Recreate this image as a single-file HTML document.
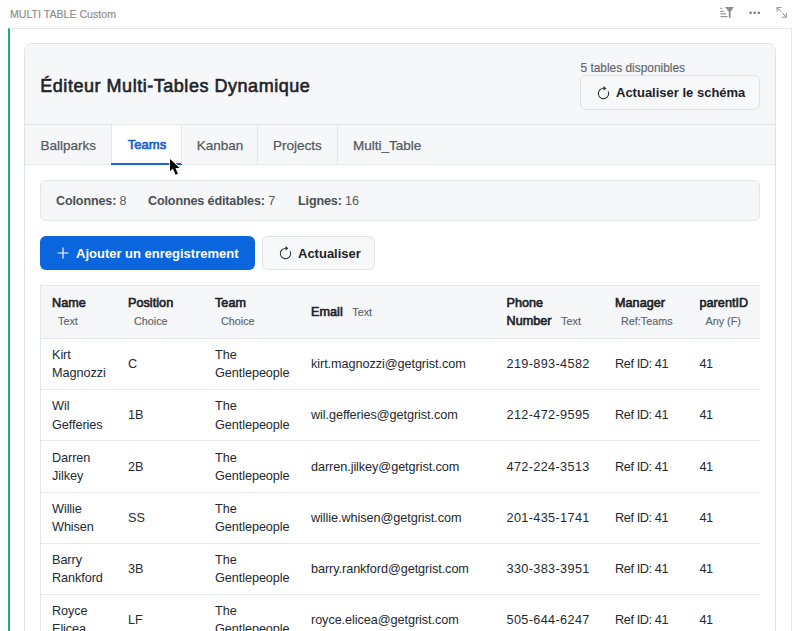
<!DOCTYPE html>
<html><head><meta charset="utf-8">
<style>
*{box-sizing:border-box;margin:0;padding:0}
html,body{width:800px;height:631px;overflow:hidden;background:#fff}
body{font-family:"Liberation Sans",sans-serif;position:relative;color:#1f2328}
.abs{position:absolute;white-space:nowrap}
#wtitle{left:10px;top:8px;font-size:10.6px;color:#8c8c8c;line-height:12px;-webkit-text-stroke:0.15px #8c8c8c}
#frame{left:8px;top:28px;width:784px;height:620px;border-top:1px solid #e6e6e6;border-right:1px solid #e8e8e8;border-left:2px solid #16b378}
#card{left:24px;top:43px;width:752px;height:620px;border:1px solid #dfe3e8;border-radius:8px;background:#fff;overflow:hidden}
#chead{left:0;top:0;width:750px;height:121px;background:#f6f7f9}
#title{left:40.3px;top:74.5px;font-size:18px;font-weight:400;letter-spacing:0.53px;color:#1f2328;line-height:22px;-webkit-text-stroke:0.6px #1f2328}
#avail{left:580.5px;top:61px;font-size:11.9px;color:#62666b;line-height:14px;-webkit-text-stroke:0.15px #62666b}
.btn{position:absolute;border-radius:6px;font-weight:700;white-space:nowrap}
#schema{left:580px;top:75px;width:180px;height:34.5px;border:1px solid #e0e3e7;background:#f7f8fa;color:#1f2328;font-size:13px}
.tab{position:absolute;top:0;height:39px;font-size:13.5px;color:#555a60;line-height:42px;-webkit-text-stroke:0.25px #555a60;letter-spacing:0}
.tsep{position:absolute;top:0;width:1px;height:39px;background:#e3e6ea}
#stats{left:40px;top:180px;width:720px;height:41px;border:1px solid #e1e4e8;border-radius:6px;background:#f6f7f9;font-size:12.6px;color:#555a60}
#stats b{color:#4a4f55}
#stats span{letter-spacing:-0.15px}
#add{left:40px;top:236px;width:215px;height:34px;background:#0b65dc;color:#fff;font-size:13px}
#refresh{left:262px;top:236px;width:113px;height:34px;border:1px solid #e0e3e7;background:#f7f8fa;color:#1f2328;font-size:13px}
#tbl{left:40px;top:285px;width:720px;height:400px;border-top:1px solid #e3e6ea;border-left:1px solid #e3e6ea;overflow:hidden}
#thead{position:absolute;left:0;top:0;width:760px;height:53px;background:#f6f7f9;border-bottom:1px solid #e3e6ea}
.h{position:absolute;top:0.8px;height:52px;display:flex;align-items:center;font-size:12.6px;line-height:17.8px;white-space:normal}
.h b{color:#1f2328;font-weight:400;-webkit-text-stroke:0.65px #1f2328;letter-spacing:0.05px}
.t{display:inline-block;margin-left:6px;font-size:10.8px;color:#5f646b;font-weight:400;-webkit-text-stroke:0.15px #5f646b}
.row{position:absolute;left:0;width:760px;height:51.2px;border-bottom:1px solid #e6e9ec}
.c{position:absolute;top:0.3px;height:50.2px;display:flex;align-items:center;font-size:12.7px;line-height:18.2px;color:#24292f;white-space:nowrap;letter-spacing:-0.08px}
svg{position:absolute;overflow:visible}
.ph{letter-spacing:0.35px}
.rf{letter-spacing:-0.4px}
.n41{letter-spacing:-0.5px}
</style></head><body>
<div id="wtitle" class="abs">MULTI TABLE Custom</div>
<svg style="left:0;top:0" width="800" height="28">
  <g fill="#8c8c8c">
    <rect x="720.2" y="7.8" width="2" height="1.1"/>
    <rect x="720.2" y="10.8" width="3.7" height="1.1"/>
    <rect x="720.4" y="13.3" width="5.7" height="1.1"/>
    <rect x="720.4" y="16.1" width="7.3" height="1.1"/>
    <path d="M725 6.9 H733.8 L730.6 11.8 V17.7 H728.8 V11.8 Z"/>
    <circle cx="750.6" cy="12.7" r="1.3" fill="#7a7a7a"/><circle cx="754.7" cy="12.7" r="1.3" fill="#7a7a7a"/><circle cx="758.8" cy="12.7" r="1.3" fill="#7a7a7a"/>
  </g>
  <g fill="none" stroke="#8c8c8c" stroke-width="1">
    <path d="M777.1 11.8 V7.6 H781.6 M777.1 7.6 L781.4 11.9"/>
    <path d="M786.2 13 V17.2 H781.9 M786.2 17.2 L781.9 12.9"/>
  </g>
</svg>
<div id="frame" class="abs"></div>
<div id="card" class="abs">
  <div id="chead" class="abs"></div>
</div>
<div id="title" class="abs">Éditeur Multi-Tables Dynamique</div>
<div id="avail" class="abs">5 tables disponibles</div>
<div id="schema" class="btn"><svg style="left:14.7px;top:9.9px" width="15" height="15" viewBox="0 0 16 16" fill="#1f2328"><path fill-rule="evenodd" d="M8 3a5 5 0 1 0 4.546 2.914.5.5 0 0 1 .908-.417A6 6 0 1 1 8 2z"/><path d="M8 4.466V.534a.25.25 0 0 1 .41-.192l2.36 1.966c.12.1.12.284 0 .384L8.41 4.658A.25.25 0 0 1 8 4.466"/></svg><span class="abs" style="left:35px;top:9px;line-height:16px">Actualiser le schéma</span></div>
<div class="abs" style="left:25px;top:124px;width:750px;height:41px;border-top:1px solid #e3e6ea;border-bottom:1px solid #e3e6ea;background:#f6f7f9">
  <div class="tab" style="left:15.5px">Ballparks</div>
  <div class="tsep" style="left:86px"></div>
  <div class="tab" style="left:87px;width:70px;background:#fff;color:#1864cf;font-weight:400;-webkit-text-stroke:0.7px #1864cf;font-size:13px;text-align:center;line-height:40px">Teams</div>
  <div class="abs" style="left:86px;top:37.5px;width:70.5px;height:2.2px;background:#1864cf"></div>
  <div class="tsep" style="left:156px"></div>
  <div class="tab" style="left:171.7px">Kanban</div>
  <div class="tsep" style="left:232px"></div>
  <div class="tab" style="left:248px">Projects</div>
  <div class="tsep" style="left:312px"></div>
  <div class="tab" style="left:328px">Multi_Table</div>
</div>
<div id="stats" class="abs">
  <span class="abs" style="left:15px;top:12.3px;line-height:16px"><b>Colonnes:</b> 8</span>
  <span class="abs" style="left:107px;top:12.3px;line-height:16px"><b>Colonnes éditables:</b> 7</span>
  <span class="abs" style="left:257px;top:12.3px;line-height:16px"><b>Lignes:</b> 16</span>
</div>
<div id="add" class="btn">
  <svg style="left:16.9px;top:11.3px" width="12" height="12" viewBox="0 0 12 12"><g stroke="#fff" stroke-width="1.15" fill="none"><path d="M0.6 6 H11.4 M6 0.6 V11.4"/></g></svg>
  <span class="abs" style="left:36px;top:10px;line-height:16px">Ajouter un enregistrement</span></div>
<div id="refresh" class="btn"><svg style="left:14.7px;top:9.1px" width="15" height="15" viewBox="0 0 16 16" fill="#1f2328"><path fill-rule="evenodd" d="M8 3a5 5 0 1 0 4.546 2.914.5.5 0 0 1 .908-.417A6 6 0 1 1 8 2z"/><path d="M8 4.466V.534a.25.25 0 0 1 .41-.192l2.36 1.966c.12.1.12.284 0 .384L8.41 4.658A.25.25 0 0 1 8 4.466"/></svg><span class="abs" style="left:35px;top:9px;line-height:16px">Actualiser</span></div>
<div id="tbl" class="abs">
  <div id="thead">
    <div class="h" style="left:11px;width:60px"><div><b>Name</b> <span class="t">Text</span></div></div>
    <div class="h" style="left:87px;width:70px"><div><b>Position</b> <span class="t">Choice</span></div></div>
    <div class="h" style="left:174px;width:70px"><div><b>Team</b> <span class="t">Choice</span></div></div>
    <div class="h" style="left:270px;width:170px"><div><b>Email</b> <span class="t">Text</span></div></div>
    <div class="h" style="left:465.5px;width:85px"><div><b>Phone Number</b> <span class="t">Text</span></div></div>
    <div class="h" style="left:574px;width:62px"><div><b>Manager</b> <span class="t">Ref:Teams</span></div></div>
    <div class="h" style="left:658.5px;width:60px"><div><b>parentID</b> <span class="t">Any (F)</span></div></div>
  </div>
<div class="row" style="top:53.0px"><div class="c" style="left:11px"><div>Kirt<br>Magnozzi</div></div><div class="c" style="left:87px"><div>C</div></div><div class="c" style="left:174px"><div>The<br>Gentlepeople</div></div><div class="c em" style="left:270px"><div>kirt.magnozzi@getgrist.com</div></div><div class="c ph" style="left:465.5px"><div>219-893-4582</div></div><div class="c rf" style="left:574px"><div>Ref ID: 41</div></div><div class="c n41" style="left:658.5px"><div>41</div></div></div>
<div class="row" style="top:104.2px"><div class="c" style="left:11px"><div>Wil<br>Gefferies</div></div><div class="c" style="left:87px"><div>1B</div></div><div class="c" style="left:174px"><div>The<br>Gentlepeople</div></div><div class="c em" style="left:270px"><div>wil.gefferies@getgrist.com</div></div><div class="c ph" style="left:465.5px"><div>212-472-9595</div></div><div class="c rf" style="left:574px"><div>Ref ID: 41</div></div><div class="c n41" style="left:658.5px"><div>41</div></div></div>
<div class="row" style="top:155.4px"><div class="c" style="left:11px"><div>Darren<br>Jilkey</div></div><div class="c" style="left:87px"><div>2B</div></div><div class="c" style="left:174px"><div>The<br>Gentlepeople</div></div><div class="c em" style="left:270px"><div>darren.jilkey@getgrist.com</div></div><div class="c ph" style="left:465.5px"><div>472-224-3513</div></div><div class="c rf" style="left:574px"><div>Ref ID: 41</div></div><div class="c n41" style="left:658.5px"><div>41</div></div></div>
<div class="row" style="top:206.6px"><div class="c" style="left:11px"><div>Willie<br>Whisen</div></div><div class="c" style="left:87px"><div>SS</div></div><div class="c" style="left:174px"><div>The<br>Gentlepeople</div></div><div class="c em" style="left:270px"><div>willie.whisen@getgrist.com</div></div><div class="c ph" style="left:465.5px"><div>201-435-1741</div></div><div class="c rf" style="left:574px"><div>Ref ID: 41</div></div><div class="c n41" style="left:658.5px"><div>41</div></div></div>
<div class="row" style="top:257.8px"><div class="c" style="left:11px"><div>Barry<br>Rankford</div></div><div class="c" style="left:87px"><div>3B</div></div><div class="c" style="left:174px"><div>The<br>Gentlepeople</div></div><div class="c em" style="left:270px"><div>barry.rankford@getgrist.com</div></div><div class="c ph" style="left:465.5px"><div>330-383-3951</div></div><div class="c rf" style="left:574px"><div>Ref ID: 41</div></div><div class="c n41" style="left:658.5px"><div>41</div></div></div>
<div class="row" style="top:309.0px"><div class="c" style="left:11px"><div>Royce<br>Elicea</div></div><div class="c" style="left:87px"><div>LF</div></div><div class="c" style="left:174px"><div>The<br>Gentlepeople</div></div><div class="c em" style="left:270px"><div>royce.elicea@getgrist.com</div></div><div class="c ph" style="left:465.5px"><div>505-644-6247</div></div><div class="c rf" style="left:574px"><div>Ref ID: 41</div></div><div class="c n41" style="left:658.5px"><div>41</div></div></div>
</div>
<svg style="left:169px;top:157.7px" width="14" height="20" viewBox="0 0 14 20">
  <path d="M1 1 L1 13.2 L3.9 10.5 L6.6 16.8 L8.9 15.8 L6.4 10.0 L10.6 9.9 Z" fill="#000" stroke="#fff" stroke-width="1.6" stroke-linejoin="round" paint-order="stroke"/>
</svg>
</body></html>
